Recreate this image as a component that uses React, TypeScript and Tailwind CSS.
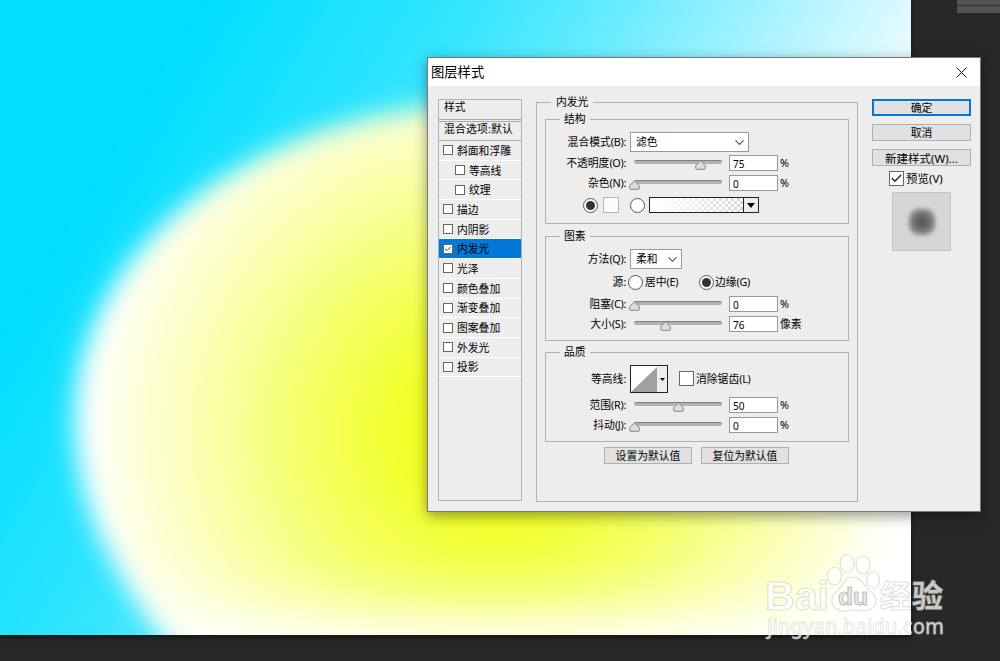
import { clsx } from "clsx";
import { Check, ChevronDown, X } from "lucide-react";
import type { ReactNode } from "react";

const EFFECTS: { name: string; nested?: boolean; selected?: boolean }[] = [
  { name: "斜面和浮雕" },
  { name: "等高线", nested: true },
  { name: "纹理", nested: true },
  { name: "描边" },
  { name: "内阴影" },
  { name: "内发光", selected: true },
  { name: "光泽" },
  { name: "颜色叠加" },
  { name: "渐变叠加" },
  { name: "图案叠加" },
  { name: "外发光" },
  { name: "投影" },
];

const BLOB_PATH = "M75 418A415 314 0 0 1 905 418A415 345 0 0 1 75 418Z";

function Artwork() {
  return (
    <svg width="911" height="635" viewBox="0 0 911 635" className="block">
      <defs>
        <linearGradient
          id="sky"
          gradientUnits="userSpaceOnUse"
          x1="148"
          y1="89"
          x2="744"
          y2="450"
        >
          <stop offset="0" stopColor="#00deff" />
          <stop offset="0.33" stopColor="#34e5ff" />
          <stop offset="0.5" stopColor="#62ebff" />
          <stop offset="0.87" stopColor="#dcf9ff" />
          <stop offset="1" stopColor="#ffffff" />
        </linearGradient>
        <radialGradient
          id="glow"
          gradientUnits="userSpaceOnUse"
          cx="0"
          cy="0"
          r="1"
          gradientTransform="translate(495 432) scale(412 392)"
        >
          <stop offset="0" stopColor="#edff05" />
          <stop offset="0.15" stopColor="#efff18" />
          <stop offset="0.25" stopColor="#f2ff30" />
          <stop offset="0.38" stopColor="#f3ff50" />
          <stop offset="0.53" stopColor="#f6ff7a" />
          <stop offset="0.65" stopColor="#f9ff9e" />
          <stop offset="0.78" stopColor="#fbffc2" />
          <stop offset="0.9" stopColor="#feffe2" />
          <stop offset="1" stopColor="#ffffff" />
        </radialGradient>
        <linearGradient
          id="bottomEdge"
          gradientUnits="userSpaceOnUse"
          x1="0"
          y1="560"
          x2="0"
          y2="637"
        >
          <stop offset="0" stopColor="#fff" stopOpacity="0" />
          <stop offset="0.5" stopColor="#fff" stopOpacity="0.22" />
          <stop offset="1" stopColor="#fff" stopOpacity="0.85" />
        </linearGradient>
        <filter id="soft" x="-20%" y="-20%" width="140%" height="140%">
          <feGaussianBlur stdDeviation="13" />
        </filter>
      </defs>
      <rect width="911" height="635" fill="url(#sky)" />
      <path d={BLOB_PATH} fill="url(#glow)" filter="url(#soft)" />
      <path d={BLOB_PATH} fill="url(#bottomEdge)" filter="url(#soft)" />
    </svg>
  );
}

function Watermark() {
  return (
    <svg
      width="190"
      height="104"
      viewBox="760 547 190 104"
      className="absolute left-[760px] top-[547px]"
      fill="#ffffff"
      fillOpacity="0.75"
      stroke="#c4c4b8"
      strokeOpacity="0.5"
      strokeWidth="1.2"
      fontFamily="'Noto Sans', 'Noto Sans CJK SC', sans-serif"
    >
      <text
        x="765"
        y="610"
        fontSize="41"
        fontWeight="800"
        textLength="64"
        lengthAdjust="spacingAndGlyphs"
        fontFamily="'Liberation Sans', sans-serif"
      >
        Bai
      </text>
      <ellipse cx="834.500" cy="576" rx="7" ry="9" />
      <ellipse cx="847" cy="563.500" rx="7" ry="9" />
      <ellipse cx="863" cy="565" rx="7" ry="9" />
      <ellipse cx="873" cy="580" rx="6.500" ry="8.500" />
      <path d="M853 577c-8 0-10 9-15 13-4 3-7 7-6 12 1 6 7 9 12 9 4 0 6-1 9-1s6 1 10 1c6 0 12-3 13-9 1-5-3-9-7-12-5-4-8-13-16-13z" />
      <text
        x="838"
        y="605"
        fontSize="24"
        fontWeight="600"
        textLength="30"
        lengthAdjust="spacingAndGlyphs"
        fill="#e4e4e4"
        stroke="#b8b8b8"
        strokeOpacity="0.8"
        fontFamily="'Liberation Sans', sans-serif"
      >
        du
      </text>
      <text x="880" y="607" fontSize="31" fontWeight="700" textLength="63">
        经验
      </text>
      <text
        x="767"
        y="634"
        fontSize="21"
        fontWeight="500"
        textLength="177"
        lengthAdjust="spacingAndGlyphs"
        strokeWidth="0.8"
      >
        jingyan.baidu.com
      </text>
    </svg>
  );
}

function Caption({
  text,
  hotkey,
  colon,
}: {
  text: string;
  hotkey?: string;
  colon?: boolean;
}) {
  return (
    <span className="whitespace-nowrap">
      {text}
      <span className="tracking-[-0.3px]">
        {hotkey && `(${hotkey})`}
        {colon && ":"}
      </span>
    </span>
  );
}

function Row({
  text,
  hotkey,
  className,
  children,
}: {
  text?: string;
  hotkey?: string;
  className?: string;
  children: ReactNode;
}) {
  return (
    <div className={clsx("flex items-center", className ?? "h-5")}>
      <div className="mr-1 w-20 shrink-0 text-right">
        {text && <Caption text={text} hotkey={hotkey} colon />}
      </div>
      {children}
    </div>
  );
}

function Group({
  title,
  className,
  legendClassName = "ml-[14px] px-[4px]",
  children,
}: {
  title: string;
  className?: string;
  legendClassName?: string;
  children: ReactNode;
}) {
  return (
    <fieldset className={clsx("border border-[#b0b0b0]", className)}>
      <legend className={clsx("h-[14px] leading-[13px]", legendClassName)}>
        {title}
      </legend>
      {children}
    </fieldset>
  );
}

function Select({ value, className }: { value: string; className: string }) {
  return (
    <div
      className={clsx(
        "flex h-5 items-center justify-between border border-[#999] bg-white pl-[5px] pr-px",
        className,
      )}
    >
      {value}
      <ChevronDown size={15} strokeWidth={1.8} className="text-[#555]" />
    </div>
  );
}

function Slider({ percent }: { percent: number }) {
  return (
    <div className="relative ml-1 mt-[3px] h-[10px] w-[88px] shrink-0">
      <div className="h-[4px] rounded-sm border-t border-[#808080] bg-[#b2b2b2]" />
      <svg
        width="11"
        height="10"
        viewBox="0 0 11 10"
        className="absolute top-0 -ml-[5px]"
        style={{ left: `${percent}%` }}
      >
        <path
          d="M5.500 .8L10.300 5.500V8Q10.300 9.300 9 9.300H2Q.7 9.300 .7 8V5.500Z"
          fill="#dcdcdc"
          stroke="#858585"
        />
      </svg>
    </div>
  );
}

function SliderRow({
  text,
  hotkey,
  percent,
  value,
  unit = "%",
}: {
  text: string;
  hotkey: string;
  percent: number;
  value: number;
  unit?: string;
}) {
  return (
    <Row text={text} hotkey={hotkey}>
      <Slider percent={percent} />
      <div className="ml-[7px] h-4 w-[49px] shrink-0 border border-[#999] bg-white pl-[3px] text-[10px] leading-[16px]">
        {value}
      </div>
      <span className="ml-[2px] whitespace-nowrap">{unit}</span>
    </Row>
  );
}

function Radio({ checked }: { checked?: boolean }) {
  return (
    <span className="flex size-[15px] shrink-0 items-center justify-center rounded-full border border-[#555] bg-white">
      {checked && <span className="size-[9px] rounded-full bg-[#333]" />}
    </span>
  );
}

function Checkbox({
  checked,
  className,
}: {
  checked?: boolean;
  className: string;
}) {
  return (
    <span
      className={clsx(
        "flex shrink-0 items-center justify-center border border-[#666] bg-white text-[#222]",
        className,
      )}
    >
      {checked && <Check className="size-full" strokeWidth={2.5} />}
    </span>
  );
}

function PushButton({
  primary,
  className,
  children,
}: {
  primary?: boolean;
  className: string;
  children: ReactNode;
}) {
  return (
    <button
      type="button"
      className={clsx(
        "flex h-[17px] items-center justify-center bg-[#e1e1e1] pt-[2px]",
        primary ? "border-2 border-[#0078d7]" : "border border-[#b0b0b0]",
        className,
      )}
    >
      {children}
    </button>
  );
}

function EffectList() {
  return (
    <div className="h-[402px] w-[84px] shrink-0 border border-[#b0b0b0] leading-[14px]">
      <div className="h-[22px] border-b-[3px] border-double border-[#a8a8a8] pl-[5px]">
        样式
      </div>
      <div className="h-[19px] whitespace-nowrap border-b border-[#b0b0b0] pl-[5px] tracking-[0.2px]">
        混合选项:默认
      </div>
      {EFFECTS.map(({ name, nested, selected }) => (
        <div
          key={name}
          className={clsx(
            "flex h-[19.7px] items-center gap-[4px] whitespace-nowrap border-b border-white pt-px",
            nested ? "pl-[16px]" : "pl-[4px]",
            selected && "bg-[#0078d7]",
          )}
        >
          <Checkbox checked={selected} className="-mt-px size-[10px]" />
          {name}
        </div>
      ))}
    </div>
  );
}

function StructureGroup() {
  return (
    <Group title="结构" className="h-[112px]">
      <Row text="混合模式" hotkey="B" className="mb-px mt-[6px] h-5">
        <Select value="滤色" className="w-[119px]" />
      </Row>
      <SliderRow text="不透明度" hotkey="O" percent={75} value={75} />
      <SliderRow text="杂色" hotkey="N" percent={0} value={0} />
      <div className="ml-[37px] mt-[2px] flex h-5 items-center">
        <Radio checked />
        <span className="ml-[5px] size-4 border border-[#b5b5b5] bg-[#fcfcfc]" />
        <span className="ml-[11px]">
          <Radio />
        </span>
        <div className="ml-[4px] flex h-4 w-[110px] border border-[#222] bg-white">
          <div className="flex-1 bg-[linear-gradient(90deg,#fff_5%,#fff3),repeating-conic-gradient(#ccc_0_25%,#fff_0_50%)] bg-[size:auto,6px_6px]" />
          <div className="flex w-[15px] items-center justify-center border-l border-[#222] bg-[#ededed]">
            <svg width="8" height="5" viewBox="0 0 8 5">
              <path d="M0 0H8L4 5Z" fill="#000" />
            </svg>
          </div>
        </div>
      </div>
    </Group>
  );
}

function ElementsGroup() {
  return (
    <Group title="图素" className="mt-[5px] h-[112px]">
      <Row text="方法" hotkey="Q" className="mt-[6px] h-5">
        <Select value="柔和" className="w-[52px]" />
      </Row>
      <Row text="源" className="mb-[2px] mt-[3px] h-5">
        <span className="-ml-[2px] flex w-[71px] items-center gap-[2px]">
          <Radio />
          <Caption text="居中" hotkey="E" />
        </span>
        <span className="flex items-center gap-px">
          <Radio checked />
          <Caption text="边缘" hotkey="G" />
        </span>
      </Row>
      <SliderRow text="阻塞" hotkey="C" percent={0} value={0} />
      <SliderRow text="大小" hotkey="S" percent={35} value={76} unit="像素" />
    </Group>
  );
}

function QualityGroup() {
  return (
    <Group title="品质" className="mt-[4px] h-[97px]">
      <Row text="等高线" className="mb-px mt-[6px] h-7">
        <div className="flex h-7 w-[38px] border border-[#222] bg-white">
          <svg width="26" height="26" viewBox="0 0 26 26" className="shrink-0">
            <path d="M0 26L26 1V26Z" fill="#a0a0a0" />
          </svg>
          <div className="flex flex-1 items-center justify-center bg-[#ededed]">
            <svg width="5" height="3" viewBox="0 0 5 3">
              <path d="M0 0H5L2.500 3Z" fill="#000" />
            </svg>
          </div>
        </div>
        <Checkbox className="-mt-px ml-[11px] mr-[2px] size-[15px]" />
        <Caption text="消除锯齿" hotkey="L" />
      </Row>
      <div className="pt-px">
        <SliderRow text="范围" hotkey="R" percent={50} value={50} />
        <SliderRow text="抖动" hotkey="J" percent={0} value={0} />
      </div>
    </Group>
  );
}

function LayerStyleDialog() {
  return (
    <div className="absolute left-[427px] top-[57px] h-[455px] w-[554px] border border-[#777] bg-[#ededed] shadow-[0_4px_13px_rgba(0,0,0,0.4)]">
      <div className="flex h-7 items-center justify-between bg-white pl-[3px] pr-[9px]">
        <span className="pt-[2px] text-[13.3px] leading-none">图层样式</span>
        <X size={19} strokeWidth={1.15} />
      </div>
      <div className="flex items-start pl-[10px] pt-[9px]">
        <div className="mt-[4px]">
          <EffectList />
        </div>
        <Group
          title="内发光"
          className="ml-[14px] h-[407px] w-[322px] px-2"
          legendClassName="ml-[6px] px-[5px]"
        >
          <div className="pt-[3px]">
            <StructureGroup />
            <ElementsGroup />
            <QualityGroup />
            <div className="ml-[59px] mt-[5px] flex gap-[9px]">
              <PushButton className="w-[88px]">设置为默认值</PushButton>
              <PushButton className="w-[88px]">复位为默认值</PushButton>
            </div>
          </div>
        </Group>
        <div className="ml-[14px] mt-[4px] flex w-[99px] flex-col items-stretch">
          <PushButton primary className="mb-[8px]">
            确定
          </PushButton>
          <PushButton className="mb-[8px]">取消</PushButton>
          <PushButton className="text-[11.5px]">新建样式(W)...</PushButton>
          <div className="mt-[5px] flex items-center gap-[2px] pl-[17px]">
            <Checkbox checked className="size-[15px]" />
            <span className="text-[11.5px] leading-[15px]">预览(V)</span>
          </div>
          <div className="ml-[20px] mt-[6px] flex size-[59px] items-center justify-center border border-[#c4c4c4] bg-[#d6d6d6]">
            <div className="size-[26px] rounded-[10px] bg-[radial-gradient(#4c4c4c,#8a8a8a_70%)] blur-[2px]" />
          </div>
        </div>
      </div>
    </div>
  );
}

export default function App() {
  return (
    <main className="relative h-[661px] w-[1000px] overflow-hidden bg-[#282828] font-['Noto_Sans','Noto_Sans_CJK_SC',sans-serif] text-[10.8px] leading-none text-black">
      <div className="w-[911px] shadow-[0_2px_5px_#111]">
        <Artwork />
      </div>
      <div className="absolute right-0 top-0 h-[13px] w-[43px] bg-[#535353]">
        <div className="mt-[5px] h-px bg-[#333]" />
      </div>
      <LayerStyleDialog />
      <Watermark />
    </main>
  );
}
